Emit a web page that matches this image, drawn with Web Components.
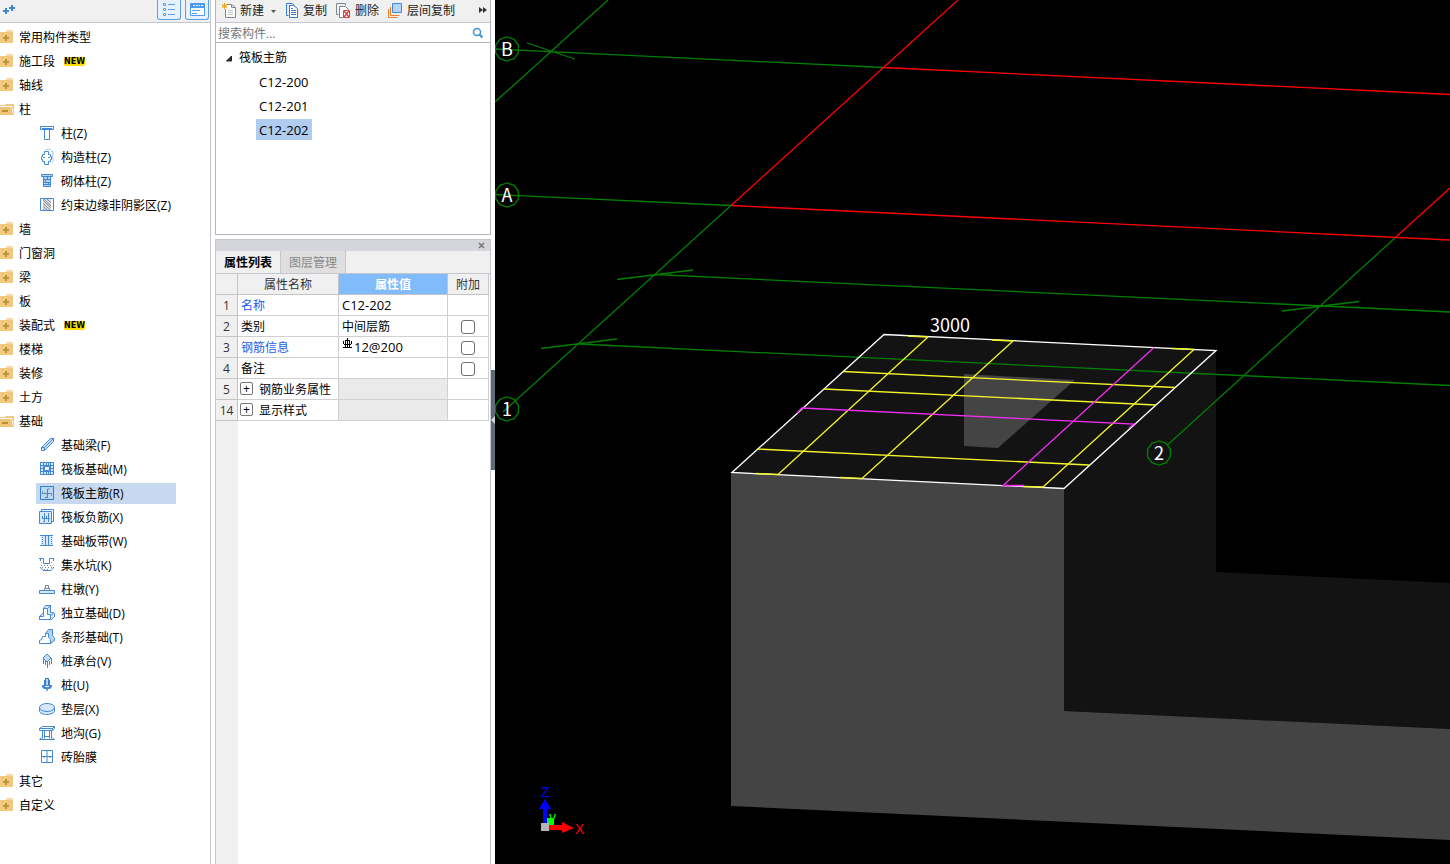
<!DOCTYPE html>
<html lang="zh-CN">
<head>
<meta charset="utf-8">
<title>筏板主筋</title>
<style>
  html, body {
    height: 100%;
    margin: 0;
  }

  body {
    --line: #c5c6cd;
    --bar: #f0f0f0;
    --blue: #4189d6;
    font: 12px/24px "Open Sans", "Noto Sans CJK SC", sans-serif;
    color: #000;
    background: #fff;
    overflow: hidden;
  }
</style>
</head>
<body>
<modeling-app></modeling-app>

<script>
const ICONS = {
  folder: `<path fill="#f0c87e" d="M0 2h13v11H0z"/><path fill="#f6dca8" d="M7 0h5l1 1v1H6V1z"/><path stroke="#c0933a" stroke-width="2" d="M3 8h6M6 5v6"/>`,
  folderOpen: `<path fill="#f0c87e" d="M0 3h5l1-1h8v11H0z"/><path stroke="#fff" d="M0 4.500h11.500l1.500 7"/><path fill="#efc47a" d="M0 5h11l2 8H0z"/><path stroke="#bd8f2f" stroke-width="2" d="M2 9h6"/>`,
  plus: `<path stroke="#3d86d8" stroke-width="2" d="M3 10h6M6 7v6M9 7h6M12 4v6"/>`,
  list: `<path stroke="#5a9fe8" fill="#fff" d="M2.500 2.500h2v2h-2zM2.500 7.500h2v2h-2zM2.500 12.500h2v2h-2z"/><path stroke="#5a9fe8" d="M7 3.500h7M7 8.500h7M7 13.500h7"/>`,
  card: `<path fill="#fff" stroke="#4e9cf2" d="M1.500 2.500h14v12h-14z"/><path fill="#4e9cf2" d="M2 3h13v4H2z"/><path stroke="#fff" d="M4 4.500h2M7 4.500h2M10 4.500h1M12 4.500h2"/><path stroke="#4e9cf2" d="M3 9.500h8M3 12.500h5"/>`,
  column: `<path fill="#fff" stroke="#4189d6" d="M1.500 1.500h13v3h-13z"/><path stroke="#4189d6" d="M3 3.500h10M5.500 4.500v10h5v-10"/>`,
  tieColumn: `<path stroke="#a9c9ee" d="M6 1.500l1-1h4l1 1v1h2v4h-1v2h1v4l-2 2"/><path fill="#fff" stroke="#4189d6" d="M5.500 2.500h4v3h2v2h1v3h-1v2h-2v3h-4v-3h-2v-2h-1v-3h1v-2h2z"/><path stroke="#4189d6" d="M4 8.500h2M9 8.500h2"/>`,
  masonry: `<path fill="#b7d4f4" stroke="#4189d6" d="M2.500 1.500h11v2h-11zM4.500 3.500h7v10h-7z"/><path stroke="#4189d6" d="M5 6.500h6M5 9.500h6M5 11.500h6M8.500 4v2M6.500 7v2M9.500 9v2"/>`,
  hatch: `<path fill="#fff" stroke="#4189d6" d="M1.500 1.500h13v12h-13z"/><path fill="#d6d9dc" d="M4 2h8v11H4z"/><path stroke="#8f969c" d="M4 3l8 8M4 6l7 7M4 9l4 4M5 2l7 7M8 2l4 4M4 12l1 1"/>`,
  beam: `<path fill="#cfe1f6" stroke="#4189d6" d="M2.500 10.500l9-9h3v3l-9 9h-3zM2.500 10.500h3v3M5.500 10.500l9-9"/>`,
  raft: `<path fill="#d8e8fa" stroke="#4189d6" d="M1.500 1.500h13v12h-13z"/><path stroke="#4189d6" d="M4.500 1v13M11.500 1v13M1 4.500h13M1 10.500h13M7.500 2v3M9.500 2v3M7.500 10v4M9.500 10v4M2 7.500h3M11 7.500h3"/><path fill="#fff" stroke="#4189d6" d="M5.500 5.500h5v4h-5z"/>`,
  raftMain: `<path fill="#b9d6f3" stroke="#2e7fd3" d="M1.500 1.500h13v13h-13z"/><path stroke="#66829b" d="M3.500 6.500v2h9v2M8.500 13v-9h2M6 12.500h2"/>`,
  raftNeg: `<path fill="#fff" stroke="#4189d6" d="M2.500 2.500v-2h12v12h-2"/><path fill="#d8e8fa" stroke="#4189d6" d="M.5 2.500h12v12H.5z"/><path stroke="#4189d6" d="M5.500 4v9M9.500 4v9M3 9.500h8M3.500 7v3M7.500 7v3M4 12.500h2"/>`,
  strip: `<path fill="#d8e8fa" d="M2 3h12v9H2z"/><path stroke="#4189d6" d="M1 2.500h13M1 12.500h13M6.500 2v10M9.500 2v10"/><path stroke="#4189d6" stroke-dasharray="1 1" d="M3.500 4v8M12.500 4v8"/>`,
  sump: `<path stroke="#4189d6" d="M0 1.500h4.500v5h6v-5H15M1.500 2v2M14.500 2v2M1 10l3 3.500h8l3-3.500"/><path stroke="#888" stroke-dasharray="1 2" d="M2 5.500h2M2 8.500h11M3 10.500h10M5 12.500h6M12 5.500h2"/>`,
  pedestal: `<path fill="#fff" stroke="#7c8790" d="M6.500 4.500h3v3h-3zM5.500 7.500h5v2h-5z"/><path fill="#d8e8fa" stroke="#4189d6" d="M.5 9.500h15v3H.5z"/>`,
  isolated: `<path fill="#d8e8fa" stroke="#4189d6" d="M.5 11.500l3-3h1v-5l2-3h5v7h3l1 1v3l-3 3H.5z"/><path fill="#fff" stroke="#4189d6" d="M4.500 3.500h4v6h3v5H.5v-3h4zM8.500 3.500l3-3M11.500 11l3-3"/>`,
  stripFooting: `<path fill="#b7d4f4" stroke="#4189d6" d="M6.500 4.500l3-4h4v6l2 3v2l-4 3z"/><path fill="#fff" stroke="#4189d6" d="M6.500 4.500h3v4l2 2v4H.5v-3l2-1 1-3h3z"/>`,
  pileCap: `<path fill="#c4dbf4" stroke="#4189d6" d="M8 1l4 4-4 4-4-4z"/><path stroke="#4189d6" d="M4.500 5v6M6.500 8v4M8.500 9v6M10.500 8v4M12.500 5v6"/>`,
  pile: `<path fill="#b7d4f4" stroke="#2e74bd" d="M6.500 1.500h3v7h-3z"/><path fill="#4189d6" d="M5 3h1v6H5zM10 3h1v6h-1zM3 8h10v2l-2 2H9l-1 3-1-3H5l-2-2z"/><path stroke="#fff" d="M6 9.500h4"/>`,
  cushion: `<path fill="#d8e8fa" stroke="#4189d6" d="M.5 6v4c0 2 4 3.500 7.500 3.500s7.500-1.500 7.500-3.500V6"/><ellipse cx="8" cy="6.500" rx="7.500" ry="4" fill="#d8e8fa" stroke="#4189d6"/>`,
  trench: `<path stroke="#4189d6" d="M.5 3.500l3-2h12l-2 2h-13v2h13v-2M3.500 5.500v8M5.500 5.500v8M10.500 5.500v8M12.500 5.500v8M.5 14.500h15l-2-2M.5 14.500l2-2M5 11.500h6M13.500 5.500l2-2v-2"/>`,
  brick: `<path fill="#fff" stroke="#4189d6" d="M2.500 1.500h11v12h-11zM2.500 7.500h11M8 2v11"/><path stroke="#4189d6" d="M5 7v2M11 7v2"/>`,
  create: `<path fill="#fff" stroke="#7e8991" d="M4.500 1.500h6l4 3v10h-10z"/><path stroke="#7e8991" d="M10.500 1.500v3h4"/><path stroke="#bfc5c9" d="M7 7.500h5M7 9.500h5M7 11.500h5"/><path fill="#fff" d="M1 0h5v6H1z"/><path stroke="#f09a1c" d="M1 1l5 4M6 1l-5 4M3.500 0v6M1 3h5"/>`,
  copy: `<path stroke="#3379cd" d="M4.500 12.500h-2v-12h6l2 2"/><path fill="#fff" stroke="#3379cd" d="M5.500 2.500h4l4 3v9h-8z"/><path stroke="#3379cd" d="M7 7.500h5M7 9.500h5M7 11.500h5M7 5.500h2"/>`,
  remove: `<path stroke="#7e8991" d="M2.500 11.500h-2v-11h9v2"/><path fill="#fff" stroke="#7e8991" d="M3.500 3.500h6l3 3v8h-9z"/><path fill="#fff" stroke="#d34a46" d="M7.500 7.500h6v7h-6z"/><path stroke="#d34a46" stroke-width="1.500" d="M8 8l5 6M13 8l-5 6"/>`,
  layers: `<path stroke="#ef7c28" d="M.5 6v8.500h9M2.500 4v8.500h9"/><path fill="#b5d5fb" stroke="#3c88df" d="M4.500.5h9v9h-9z"/>`,
  search: `<circle cx="7" cy="7" r="3.500" stroke="#3f91cf" stroke-width="1.500"/><path stroke="#3f91cf" stroke-width="2" d="M9.500 9.500l3 3"/>`,
  more: `<path fill="#333" d="M3 3l4 3-4 3zM7 3l4 3-4 3z"/>`,
  caret: `<path fill="#555" d="M4 7h5l-2.500 3z"/>`,
  close: `<path stroke="#777" stroke-width="1.500" d="M5 5l5 5M10 5l-5 5"/>`,
  opened: `<path fill="#333" stroke="#222" d="M10.500 6v5h-5z"/>`,
  rebar: `<path stroke="#000" d="M5.500 0v9M1 9.500h9M2 6.500h7M3 2.500h5M1.500 3v3M9.500 3v3M3.500 3v6M7.500 3v6"/>`
};

class AppIcon extends HTMLElement {
  constructor() {
    super();
    this.attachShadow({ mode: 'open' });
  }

  connectedCallback() {
    const size = this.getAttribute('size') || 16;
    this.shadowRoot.innerHTML = `
      <style>
        :host { display: inline-flex; flex: none; }
        svg { display: block; }
      </style>
      <svg width="${size}" height="${size}" viewBox="0 0 ${size} ${size}" fill="none" aria-hidden="true">${ICONS[this.getAttribute('name')]}</svg>
    `;
  }
}

class TreeFolder extends HTMLElement {
  constructor() {
    super();
    this.attachShadow({ mode: 'open' });
  }

  connectedCallback() {
    this.render();
  }

  render() {
    const open = this.hasAttribute('open');
    this.shadowRoot.innerHTML = `
      <style>
        :host { display: block; }

        button {
          display: flex;
          align-items: center;
          gap: 5px;
          width: 100%;
          height: 24px;
          padding: 0;
          border: 0;
          background: none;
          font: inherit;
          color: inherit;
          text-align: left;
        }

        .label {
          padding-top: 2px;
          line-height: 22px;
        }

        .new {
          margin-left: 4px;
          border-radius: 2px;
          background: #ffdc00;
          font: bold 8px/9px "DejaVu Sans", sans-serif;
        }

        .items { display: ${open ? 'block' : 'none'}; }
      </style>
      <button aria-expanded="${open}">
        <app-icon name="${open ? 'folderOpen' : 'folder'}" size="14"></app-icon>
        <span class="label">${this.getAttribute('label')}</span>
        ${this.hasAttribute('new') ? '<span class="new">NEW</span>' : ''}
      </button>
      <div class="items"><slot></slot></div>
    `;

    this.shadowRoot.querySelector('button').addEventListener('click', () => {
      this.toggleAttribute('open');
      this.render();
    });
  }
}

class TreeItem extends HTMLElement {
  constructor() {
    super();
    this.attachShadow({ mode: 'open' });
  }

  connectedCallback() {
    this.shadowRoot.innerHTML = `
      <style>
        :host {
          display: flex;
          box-sizing: border-box;
          height: 24px;
          padding: 2px 0 0 36px;
        }

        button {
          display: flex;
          align-items: flex-start;
          gap: 6px;
          box-sizing: border-box;
          min-width: 140px;
          height: 21px;
          padding: 2px 3px 0;
          border: 0;
          background: none;
          font: inherit;
          line-height: 18px;
          color: inherit;
          white-space: nowrap;
        }

        :host([selected]) button { background: #c8d8ee; }
      </style>
      <button><app-icon name="${this.getAttribute('icon')}"></app-icon><slot></slot></button>
    `;
  }
}

class ComponentSidebar extends HTMLElement {
  constructor() {
    super();
    this.attachShadow({ mode: 'open' });
  }

  connectedCallback() {
    this.shadowRoot.innerHTML = `
      <style>
        :host {
          display: flex;
          flex-direction: column;
          border-right: 1px solid var(--line);
        }

        header {
          display: flex;
          align-items: flex-start;
          gap: 4px;
          height: 22px;
          padding-right: 1px;
          background: var(--bar);
          border-bottom: 1px solid var(--line);
        }

        header button {
          display: flex;
          justify-content: center;
          align-items: flex-start;
          box-sizing: border-box;
          width: 24px;
          height: 20px;
          padding: 1px 0 0;
          border: 1px solid #5a9fe8;
          border-top: 0;
          border-radius: 0 0 3px 3px;
          background: #e6f1fd;
        }

        header .add {
          justify-content: flex-start;
          margin-right: auto;
          border: 0;
          background: none;
        }

        nav { padding-top: 2px; }
      </style>
      <header>
        <button class="add" aria-label="添加"><app-icon name="plus"></app-icon></button>
        <button aria-label="列表"><app-icon name="list"></app-icon></button>
        <button aria-label="卡片"><app-icon name="card"></app-icon></button>
      </header>
      <nav><slot></slot></nav>
    `;
  }
}

class ComponentList extends HTMLElement {
  constructor() {
    super();
    this.attachShadow({ mode: 'open' });
  }

  connectedCallback() {
    this.shadowRoot.innerHTML = `
      <style>
        :host {
          display: flex;
          flex-direction: column;
          box-sizing: border-box;
          height: 235px;
          border: 1px solid #b4b5ba;
          border-top: 0;
        }

        .toolbar {
          display: flex;
          align-items: center;
          height: 22px;
          padding-left: 5px;
          background: var(--bar);
          border-bottom: 1px solid var(--line);
        }

        button {
          display: flex;
          align-items: center;
          gap: 3px;
          padding: 0;
          border: 0;
          background: none;
          font: inherit;
          line-height: 20px;
          color: #222;
          white-space: nowrap;
        }

        .toolbar button { margin-right: 9px; }
        .toolbar .create { margin-right: 1px; }
        .toolbar .more { margin: 0 0 0 auto; }

        .search {
          display: flex;
          align-items: center;
          height: 19px;
          padding-right: 4px;
          border-bottom: 1px solid #b4b5ba;
        }

        input {
          flex: 1;
          min-width: 0;
          padding: 2px 2px 0;
          border: 0;
          outline: 0;
          font: inherit;
          line-height: 17px;
        }

        input::placeholder { color: #777; }

        ul {
          margin: 0;
          padding: 3px 0 0;
          list-style: none;
        }

        li { box-sizing: border-box; height: 24px; }
        .group { padding-left: 5px; }
        .group button { gap: 2px; line-height: 24px; color: #000; }

        .leaf {
          display: flex;
          align-items: flex-start;
          padding: 1px 0 0 40px;
        }

        .leaf button {
          height: 21px;
          padding: 0 3px;
          font-size: 13px;
          color: #000;
        }

        .leaf.selected button { background: #b0ccee; }
      </style>
      <div class="toolbar">
        <button class="create"><app-icon name="create"></app-icon>新建<app-icon name="caret"></app-icon></button>
        <button><app-icon name="copy"></app-icon>复制</button>
        <button><app-icon name="remove"></app-icon>删除</button>
        <button><app-icon name="layers"></app-icon>层间复制</button>
        <button class="more" aria-label="更多"><app-icon name="more" size="14"></app-icon></button>
      </div>
      <div class="search">
        <input type="text" aria-label="搜索构件" placeholder="搜索构件...">
        <button aria-label="搜索"><app-icon name="search"></app-icon></button>
      </div>
      <ul>
        <li class="group"><button><app-icon name="opened"></app-icon>筏板主筋</button></li>
        <li class="leaf"><button>C12-200</button></li>
        <li class="leaf"><button>C12-201</button></li>
        <li class="leaf selected"><button>C12-202</button></li>
      </ul>
    `;
  }
}

class PropertyPanel extends HTMLElement {
  constructor() {
    super();
    this.attachShadow({ mode: 'open' });
  }

  connectedCallback() {
    this.shadowRoot.innerHTML = `
      <style>
        :host {
          display: flex;
          flex-direction: column;
          flex: 1;
          border: 1px solid var(--line);
          border-bottom: 0;
        }

        button {
          padding: 0;
          border: 0;
          background: none;
          font: inherit;
          color: inherit;
        }

        .title {
          display: flex;
          justify-content: flex-end;
          align-items: center;
          height: 11px;
          background: #d5d6dc;
        }

        .title button { display: flex; }

        .tabs {
          display: flex;
          height: 22px;
          background: var(--bar);
          border-bottom: 1px solid var(--line);
        }

        .tabs button {
          padding: 2px 8px 0;
          border-right: 1px solid var(--line);
          line-height: 20px;
        }

        .tabs button:first-child { font-weight: bold; }

        .tabs button:last-child {
          background: #dfdfdf;
          color: #888;
        }

        .body {
          flex: 1;
          background: linear-gradient(to right, var(--bar) 22px, #fff 22px);
        }

        table {
          width: 273px;
          table-layout: fixed;
          border-collapse: separate;
          border-spacing: 0;
        }

        th, td {
          box-sizing: border-box;
          height: 21px;
          padding: 2px 3px 0;
          border-right: 1px solid #d0d0d0;
          border-bottom: 1px solid #d0d0d0;
          font-weight: normal;
          line-height: 18px;
          text-align: left;
          white-space: nowrap;
        }

        th {
          padding: 2px 0 0;
          border-color: #c4c4c4;
          background: var(--bar);
          color: #333;
          text-align: center;
        }

        thead th.active {
          background: #81bbfb;
          color: #fff;
          font-weight: bold;
        }

        .link { color: #1a5cf0; }
        .off { background: #eaeaea; }

        .latin {
          padding-top: 0;
          font-size: 13px;
        }

        .latin app-icon {
          vertical-align: text-top;
        }

        .group {
          display: flex;
          align-items: center;
          gap: 6px;
        }

        .group button {
          box-sizing: border-box;
          width: 13px;
          height: 13px;
          margin: 0 0 3px -1px;
          border: 1px solid #777;
          border-radius: 2px;
          background: #fff;
          line-height: 10px;
        }

        input {
          appearance: none;
          display: block;
          box-sizing: border-box;
          width: 14px;
          height: 14px;
          margin: 0 auto;
          border: 1px solid #707070;
          border-radius: 3px;
          background: #fff;
        }
      </style>
      <div class="title"><button aria-label="关闭"><app-icon name="close"></app-icon></button></div>
      <div class="tabs"><button>属性列表</button><button>图层管理</button></div>
      <div class="body">
        <table>
          <colgroup><col style="width: 22px"><col style="width: 101px"><col style="width: 109px"><col style="width: 41px"></colgroup>
          <thead>
            <tr><th></th><th>属性名称</th><th class="active">属性值</th><th>附加</th></tr>
          </thead>
          <tbody>
            <tr><th>1</th><td class="link">名称</td><td class="latin">C12-202</td><td></td></tr>
            <tr><th>2</th><td>类别</td><td>中间层筋</td><td><input type="checkbox" aria-label="类别附加"></td></tr>
            <tr><th>3</th><td class="link">钢筋信息</td><td class="latin"><app-icon name="rebar" size="12"></app-icon>12@200</td><td><input type="checkbox" aria-label="钢筋信息附加"></td></tr>
            <tr><th>4</th><td>备注</td><td></td><td><input type="checkbox" aria-label="备注附加"></td></tr>
            <tr><th>5</th><td><span class="group"><button>+</button>钢筋业务属性</span></td><td class="off"></td><td></td></tr>
            <tr><th>14</th><td><span class="group"><button>+</button>显示样式</span></td><td class="off"></td><td></td></tr>
          </tbody>
        </table>
      </div>
    `;
  }
}

class SceneView extends HTMLElement {
  constructor() {
    super();
    this.attachShadow({ mode: 'open' });
  }

  // axis bubble: a ten-sided ring with its label inside
  bubble(x, y, text) {
    const points = [];
    for (let i = 0; i < 10; i++) {
      const a = (i + 0.5) * Math.PI / 5;
      points.push(`${(x + 12 * Math.cos(a)).toFixed(1)},${(y + 12 * Math.sin(a)).toFixed(1)}`);
    }
    return `
      <polygon class="grid" points="${points.join(' ')}"/>
      <text x="${x}" y="${y + 7}" text-anchor="middle">${text}</text>`;
  }

  connectedCallback() {
    this.shadowRoot.innerHTML = `
      <style>
        :host {
          display: block;
          background: #000;
          overflow: hidden;
        }

        svg { display: block; width: 100%; height: 100%; }
        .grid, .axis, .edge, .bar, .pick { fill: none; stroke-width: 1.3; }
        .grid { stroke: #008000; }
        .axis { stroke: #f00; }
        .edge { stroke: #fff; }
        .bar { stroke: #f4f42a; }
        .pick { stroke: #f52df5; }
        text { font: 18px "Noto Sans CJK SC", sans-serif; fill: #fff; }
        .gizmo { font: 14px "Liberation Sans", sans-serif; }
      </style>
      <svg viewBox="495 0 955 864" preserveAspectRatio="xMinYMin slice">
        <path fill="#131313" d="M732 472L884 334 1216 350V572L1450 583V729L1064 711V488z"/>
        <path fill="#444" d="M731 472L1064 488V711L1450 729V840L731 806z"/>
        <path fill="#444" d="M964 374L1075 380 998 448 964 446z"/>

        <path class="grid" d="M495 49L884 67.500M608 0L495 102M527 43L575 59"/>
        <path class="grid" d="M495 194.500L731 205.500M731 205.500L503 412M655 274.500L1450 312M580 344L1450 385.500"/>
        <path class="grid" d="M617 279.500L693 270M541 348.500L617 339M1282 311L1359 301.500M1396 237L1168 444.500"/>
        <path class="axis" d="M731 205.500L958 0M884 67.500L1450 94.500M731 205.500L1450 240M1396 237L1450 188"/>

        <path class="edge" d="M884 334.500L1216 350.500 1064 488.500 732 472.500z"/>
        <path class="bar" d="M928 337L778 474.500M1013 341L862 478.500M1194 349.500L1043 487"/>
        <path class="bar" d="M843 371.500L1175 387.500M824 389L1156 405M757 449L1089 465"/>
        <path class="bar" d="M908 336L928 337M992 340L1013 341M1172 348.500L1194 349.500M756 473.500L778 474.500M840 477.500L862 478.500M1023 486.500L1043 487"/>
        <path class="pick" d="M1154 347.500L1003 485.500H1024M797 413L802 408 1134 424 1129 428"/>
        <text x="930" y="332">3000</text>
        ${this.bubble(507, 49, 'B')}
        ${this.bubble(507, 195, 'A')}
        ${this.bubble(507, 409, '1')}
        ${this.bubble(1159, 453, '2')}

        <path fill="#00f" d="M543 824V809H539L545 799 551 809H547V824z"/>
        <path fill="#0f0" d="M547 818h7v8h-7z"/>
        <path fill="#b4b4b4" d="M541 823h8v8h-8z"/>
        <path fill="#f00" d="M549 825H562V822L574 828 562 833V830H549z"/>
        <text class="gizmo" x="541" y="797" style="fill: #00f">Z</text>
        <text class="gizmo" x="575" y="834" style="fill: #f00">X</text>
        <text class="gizmo" x="549" y="822" style="fill: #0f0">y</text>
      </svg>
    `;
  }
}

class ModelingApp extends HTMLElement {
  constructor() {
    super();
    this.attachShadow({ mode: 'open' });
  }

  connectedCallback() {
    this.shadowRoot.innerHTML = `
      <style>
        :host {
          display: grid;
          grid-template-columns: 211px 276px minmax(0, 1fr);
          height: 100vh;
        }

        .middle {
          display: flex;
          flex-direction: column;
          gap: 4px;
          width: 276px;
          margin-left: 4px;
        }

        .view { display: flex; margin-left: 4px; }
        scene-view { flex: 1; }

        .splitter {
          display: flex;
          flex-direction: column;
          width: 4px;
          padding-top: 370px;
        }

        .splitter button {
          display: flex;
          align-items: center;
          height: 100px;
          padding: 0;
          border: 0;
          background: #5f6c78;
        }
      </style>
      <component-sidebar>
        <tree-folder label="常用构件类型"></tree-folder>
        <tree-folder label="施工段" new></tree-folder>
        <tree-folder label="轴线"></tree-folder>
        <tree-folder label="柱" open>
          <tree-item icon="column">柱(Z)</tree-item>
          <tree-item icon="tieColumn">构造柱(Z)</tree-item>
          <tree-item icon="masonry">砌体柱(Z)</tree-item>
          <tree-item icon="hatch">约束边缘非阴影区(Z)</tree-item>
        </tree-folder>
        <tree-folder label="墙"></tree-folder>
        <tree-folder label="门窗洞"></tree-folder>
        <tree-folder label="梁"></tree-folder>
        <tree-folder label="板"></tree-folder>
        <tree-folder label="装配式" new></tree-folder>
        <tree-folder label="楼梯"></tree-folder>
        <tree-folder label="装修"></tree-folder>
        <tree-folder label="土方"></tree-folder>
        <tree-folder label="基础" open>
          <tree-item icon="beam">基础梁(F)</tree-item>
          <tree-item icon="raft">筏板基础(M)</tree-item>
          <tree-item icon="raftMain" selected>筏板主筋(R)</tree-item>
          <tree-item icon="raftNeg">筏板负筋(X)</tree-item>
          <tree-item icon="strip">基础板带(W)</tree-item>
          <tree-item icon="sump">集水坑(K)</tree-item>
          <tree-item icon="pedestal">柱墩(Y)</tree-item>
          <tree-item icon="isolated">独立基础(D)</tree-item>
          <tree-item icon="stripFooting">条形基础(T)</tree-item>
          <tree-item icon="pileCap">桩承台(V)</tree-item>
          <tree-item icon="pile">桩(U)</tree-item>
          <tree-item icon="cushion">垫层(X)</tree-item>
          <tree-item icon="trench">地沟(G)</tree-item>
          <tree-item icon="brick">砖胎膜</tree-item>
        </tree-folder>
        <tree-folder label="其它"></tree-folder>
        <tree-folder label="自定义"></tree-folder>
      </component-sidebar>
      <div class="middle">
        <component-list></component-list>
        <property-panel></property-panel>
      </div>
      <div class="view">
        <div class="splitter">
          <button aria-label="折叠"><svg width="4" height="8" viewBox="0 0 4 8"><path fill="#ccd3da" d="M4 0v8L0 4z"/></svg></button>
        </div>
        <scene-view></scene-view>
      </div>
    `;
  }
}

customElements.define('app-icon', AppIcon);
customElements.define('tree-folder', TreeFolder);
customElements.define('tree-item', TreeItem);
customElements.define('component-sidebar', ComponentSidebar);
customElements.define('component-list', ComponentList);
customElements.define('property-panel', PropertyPanel);
customElements.define('scene-view', SceneView);
customElements.define('modeling-app', ModelingApp);
</script>
</body>
</html>
